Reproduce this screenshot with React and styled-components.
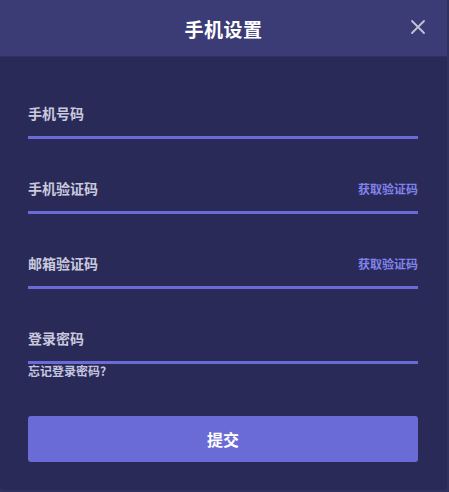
import React from 'react';
import styled, { createGlobalStyle } from 'styled-components';

const GlobalStyle = createGlobalStyle`
  html, body {
    margin: 0;
    padding: 0;
    background: #30315d;
  }
  * { box-sizing: border-box; }
`;

const Modal = styled.div`
  width: 447px;
  height: 490px;
  background: #292a58;
  border-radius: 0 0 4px 4px;
  font-family: "Noto Sans CJK SC", "Noto Sans", sans-serif;
  overflow: hidden;
  display: flex;
  flex-direction: column;
`;

const Header = styled.div`
  position: relative;
  height: 58px;
  background: #3b3c76;
  border-bottom: 1px solid #30315f;
  display: flex;
  align-items: center;
  justify-content: center;
`;

const Title = styled.h2`
  margin: 0;
  font-size: 19px;
  font-weight: 700;
  color: #ffffff;
  letter-spacing: 0.5px;
`;

const CloseButton = styled.button`
  position: absolute;
  right: 21px;
  top: 19px;
  width: 16px;
  height: 16px;
  padding: 0;
  border: 0;
  background: none;
  cursor: pointer;
  display: flex;
`;

const Body = styled.form`
  padding: 46px 29px 28px 28px;
  display: flex;
  flex-direction: column;
`;

const Field = styled.div`
  display: flex;
  align-items: center;
  padding-bottom: 13px;
  border-bottom: 3px solid #6a6bd5;
  margin-bottom: ${p => (p.$last ? '0' : '39px')};
`;

const Input = styled.input`
  flex: 1;
  min-width: 0;
  height: 20px;
  padding: 0;
  border: 0;
  outline: none;
  background: transparent;
  font-family: inherit;
  font-size: 14px;
  font-weight: 700;
  color: #ffffff;
  &::placeholder {
    color: #c9c9de;
    font-weight: 700;
  }
`;

const CodeLink = styled.button`
  padding: 0;
  border: 0;
  background: none;
  font-family: inherit;
  font-size: 12px;
  font-weight: 700;
  color: #8182ea;
  cursor: pointer;
`;

const Forgot = styled.a`
  align-self: flex-start;
  margin-top: 0;
  font-size: 12px;
  line-height: 14px;
  font-weight: 700;
  color: #c6c6e0;
  text-decoration: none;
  cursor: pointer;
`;

const Submit = styled.button`
  margin-top: 38px;
  height: 46px;
  border: 0;
  border-radius: 3px;
  background: #6a6bd6;
  font-family: inherit;
  font-size: 16px;
  font-weight: 700;
  color: #ffffff;
  cursor: pointer;
`;

const fields = [
  { name: 'phone', label: '手机号码' },
  { name: 'phoneCode', label: '手机验证码', code: true },
  { name: 'mailCode', label: '邮箱验证码', code: true },
  { name: 'password', label: '登录密码', type: 'password' },
];

export default function App() {
  return (
    <>
      <GlobalStyle />
      <Modal>
        <Header>
          <Title>手机设置</Title>
          <CloseButton type="button" aria-label="关闭">
            <svg width="16" height="16" viewBox="0 0 16 16">
              <path d="M2 2 L14 14 M14 2 L2 14" stroke="#c3c3d6" strokeWidth="1.8" strokeLinecap="round" />
            </svg>
          </CloseButton>
        </Header>
        <Body onSubmit={e => e.preventDefault()}>
          {fields.map((f, i) => (
            <Field key={f.name} $last={i === fields.length - 1}>
              <Input type={f.type || 'text'} placeholder={f.label} />
              {f.code && <CodeLink type="button">获取验证码</CodeLink>}
            </Field>
          ))}
          <Forgot>忘记登录密码?</Forgot>
          <Submit type="submit">提交</Submit>
        </Body>
      </Modal>
    </>
  );
}
